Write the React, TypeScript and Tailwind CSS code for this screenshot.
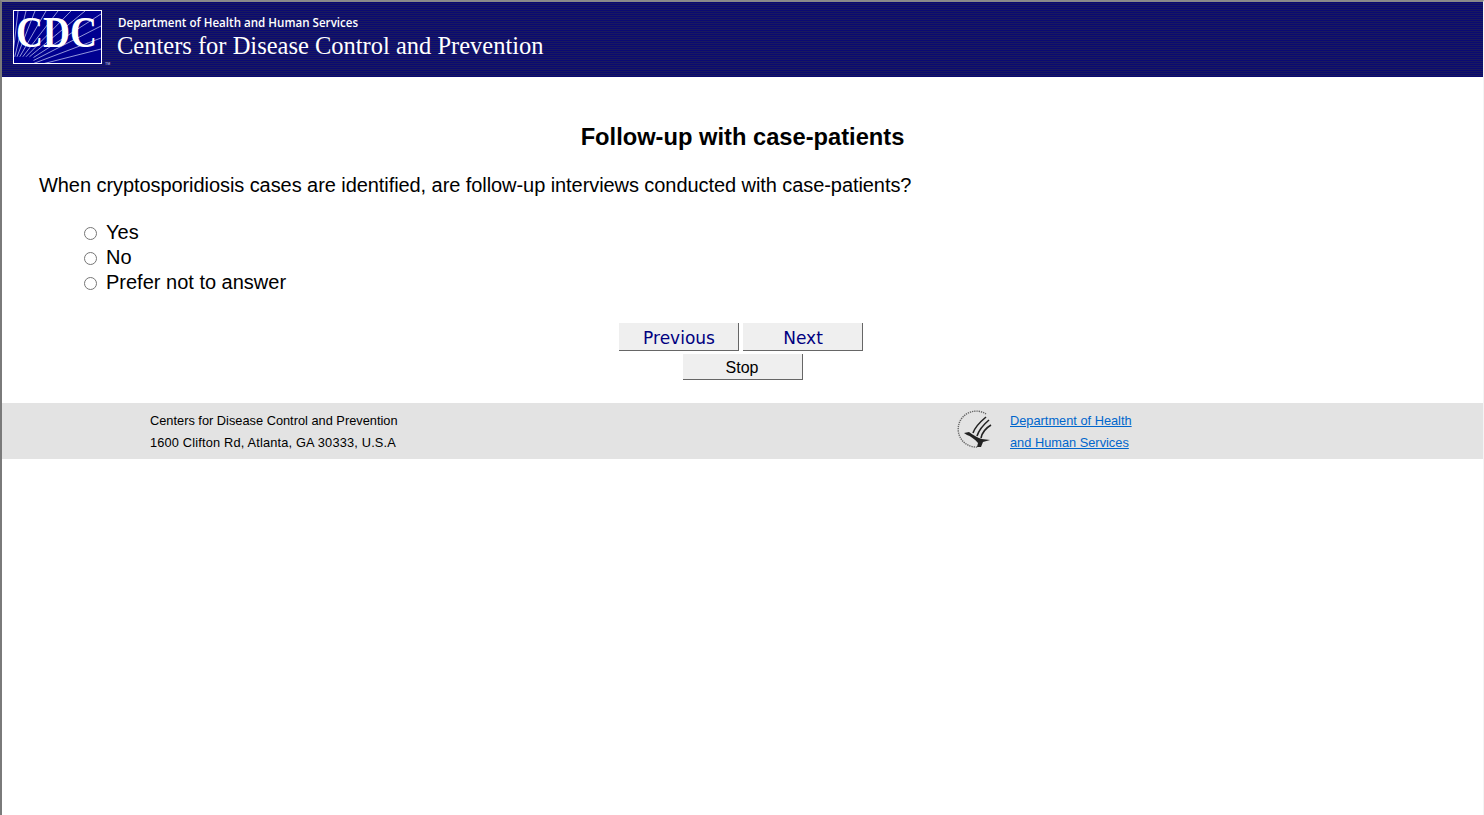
import React from "react";

const arial = "font-['Liberation_Sans',Arial,sans-serif]";

function CdcLogo() {
  const ends = [
    [5, 1], [13, 1], [22, 1], [33, 1], [45, 1], [58, 1], [72, 1],
    [88, 4], [88, 16], [88, 28], [88, 39],
  ];
  const ox = -2;
  const oy = 62;
  return (
    <svg width="97" height="57" viewBox="0 0 97 57" className="block shrink-0 overflow-visible">
      <defs>
        <clipPath id="logo-box">
          <rect x="1" y="1" width="87" height="52" />
        </clipPath>
      </defs>
      <rect x="0.5" y="0.5" width="88" height="53" fill="#000090" stroke="#ffffff" />
      <g clipPath="url(#logo-box)">
        {ends.map(([x, y], i) => (
          <line
            key={i}
            x1={ox + (x - ox) * 0.25}
            y1={oy + (y - oy) * 0.25}
            x2={x}
            y2={y}
            stroke="#b8bdee"
            strokeWidth="0.8"
          />
        ))}
      </g>
      <text
        x="43.5"
        y="37"
        textAnchor="middle"
        fontFamily="'Liberation Serif', serif"
        fontWeight="700"
        fontSize="45"
        fill="#ffffff"
        textLength="81"
        lengthAdjust="spacingAndGlyphs"
      >
        CDC
      </text>
      <text x="92" y="55" fontFamily="'Liberation Sans', sans-serif" fontSize="3.5" fill="#d6d8f2">TM</text>
    </svg>
  );
}

function Eagle() {
  return (
    <svg width="38" height="38" viewBox="0 0 38 38" className="block shrink-0" fill="none">
      <path d="M31 4 A18 18 0 1 0 23 37" stroke="#666666" strokeWidth="1.4" strokeDasharray="1.3 0.9" />
      <path d="M18 23 C20 17 25 12 31 7" stroke="#222222" strokeWidth="1.6" />
      <path d="M22 26 C24 20 28 15 34 10" stroke="#222222" strokeWidth="1.6" />
      <path d="M26 28 C27 23 31 18 36 15" stroke="#222222" strokeWidth="1.6" />
      <path d="M9 23 L14 22 C18 25 23 28 27 29 L35 30 L28 32 L26 37 L22 37 L23 33 C20 29 15 26 12 25 Z" fill="#222222" />
    </svg>
  );
}

function NavButton({ label, className }: { label: string; className: string }) {
  return (
    <button
      type="button"
      className={`w-[120px] bg-[#efefef] border-r border-b border-r-[#666666] border-b-[#666666] ${className}`}
    >
      {label}
    </button>
  );
}

function Option({ label }: { label: string }) {
  return (
    <label className="flex items-center h-[25px]">
      <input
        type="radio"
        name="followup"
        className="appearance-none w-[13px] h-[13px] rounded-full border border-[#767676] bg-white mt-[2px]"
      />
      <span className="ml-[9px] text-[20px] leading-[25px] text-black">{label}</span>
    </label>
  );
}

export default function App() {
  return (
    <div className={`h-[815px] overflow-hidden bg-white border-l-2 border-t-2 border-r border-l-[#7a7a7a] border-t-[#8a8a8a] border-r-[#f4f4f4] flex flex-col ${arial}`}>
      <header className="h-[75px] shrink-0 flex items-start pl-[11px] pt-[8px] bg-[repeating-linear-gradient(to_bottom,#0a0a72_0px,#0a0a72_1px,#1a1a5e_1px,#1a1a5e_2px)]">
        <CdcLogo />
        <div className="ml-[7px] -mt-[1px] text-white">
          <div className="font-['Open_Sans',sans-serif] font-semibold text-[11.6px] leading-[16px] pt-[6px] ml-[1px]">
            Department of Health and Human Services
          </div>
          <div className="font-['Liberation_Serif',serif] text-[24.5px] leading-[28px] mt-[1px] whitespace-nowrap">
            Centers for Disease Control and Prevention
          </div>
        </div>
      </header>

      <main className="h-[326px] shrink-0">
        <h1 className="text-center text-[23.7px] leading-[28px] font-bold text-black mt-[46px]">
          Follow-up with case-patients
        </h1>
        <p className="text-[20px] leading-[24px] tracking-[-0.07px] text-black mt-[22px] ml-[37px]">
          When cryptosporidiosis cases are identified, are follow-up interviews conducted with case-patients?
        </p>
        <div className="mt-[23px] ml-[82px] flex flex-col">
          <Option label="Yes" />
          <Option label="No" />
          <Option label="Prefer not to answer" />
        </div>
        <div className="mt-[28px] flex flex-col items-center">
          <div className="flex gap-[4px] mr-[4px]">
            <NavButton label="Previous" className="h-[28px] pt-[3px] pl-[2px] font-['DejaVu_Sans',sans-serif] text-[17px] text-[#000080]" />
            <NavButton label="Next" className="h-[28px] pt-[3px] pl-[2px] font-['DejaVu_Sans',sans-serif] text-[17px] text-[#000080]" />
          </div>
          <NavButton label="Stop" className="h-[26px] mt-[3px] pt-[2px] text-[16px] text-black" />
        </div>
      </main>

      <footer className="h-[56px] shrink-0 bg-[#e3e3e3] flex text-[12.8px] leading-[22px] pt-[7px]">
        <div className="ml-[148px] w-[805px] text-black">
          <div>Centers for Disease Control and Prevention</div>
          <div className="tracking-[0.17px]">1600 Clifton Rd, Atlanta, GA 30333, U.S.A</div>
        </div>
        <div>
          <Eagle />
        </div>
        <div className="ml-[17px] flex flex-col items-start text-[#0066cc]">
          <a href="#" className="underline">Department of Health</a>
          <a href="#" className="underline">and Human Services</a>
        </div>
      </footer>
    </div>
  );
}
